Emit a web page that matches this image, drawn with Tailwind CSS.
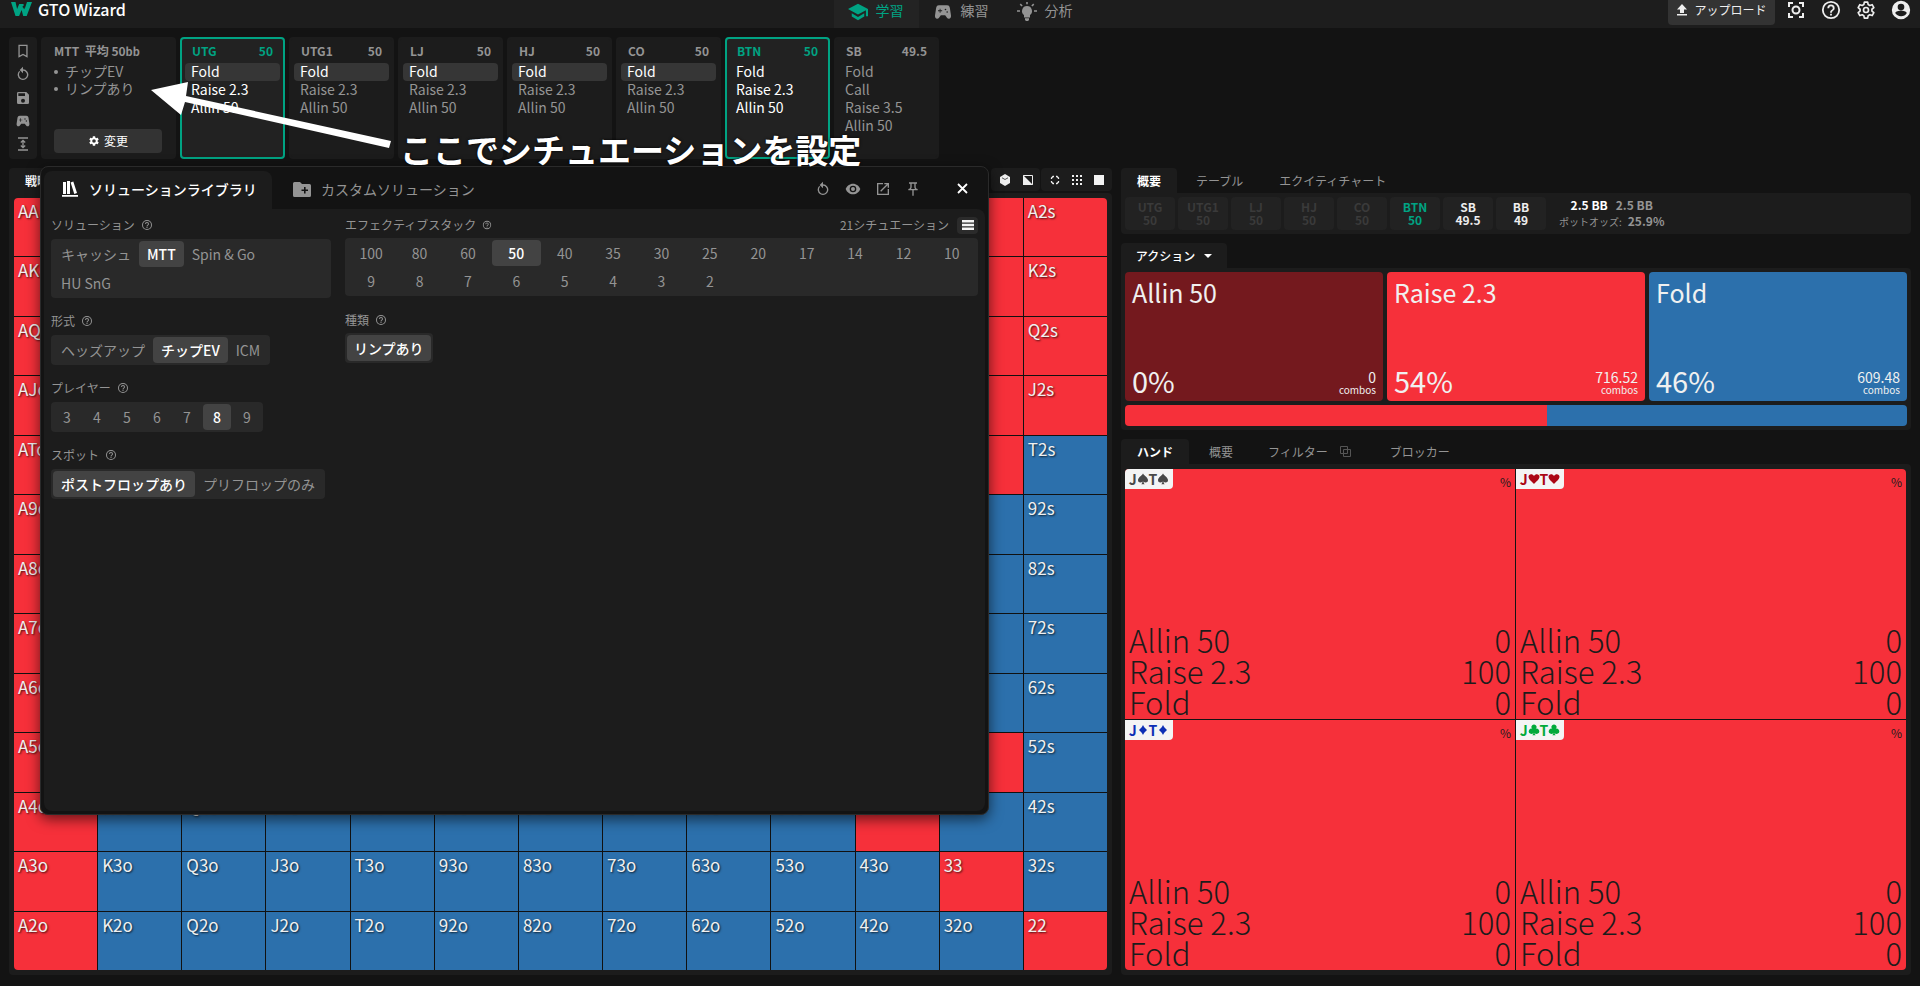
<!DOCTYPE html>
<html lang="ja">
<head>
<meta charset="utf-8">
<meta name="viewport" content="width=device-width, initial-scale=1">
<title>GTO Wizard</title>
<script src="https://cdn.jsdelivr.net/npm/@tailwindcss/browser@4"></script>
</head>
<body class="bg-[#131313] text-[#949494] font-['Noto_Sans_CJK_JP',sans-serif]">

<svg class="hidden" aria-hidden="true">
  <symbol id="i-pad" viewBox="0 0 24 24"><path fill="currentColor" fill-rule="evenodd" d="M21.6 16.1 20.200 6.800A3.300 3.300 0 0 0 17 4H7a3.300 3.300 0 0 0-3.200 2.800L2.400 16.100C2.100 18.200 3.200 20 5 20c.8 0 1.500-.3 2-.9L9.400 16h5.200l2.400 3.100c.5.600 1.200.9 2 .9 1.800 0 2.900-1.800 2.600-3.900zM11 11H9v2H8v-2H6v-1h2V8h1v2h2v1zm4-1a1 1 0 1 1 0-2 1 1 0 0 1 0 2zm2 3a1 1 0 1 1 0-2 1 1 0 0 1 0 2z"/></symbol>
  <symbol id="i-undo" viewBox="0 0 24 24"><path fill="currentColor" d="M12 5V1L7 6l5 5V7c3.300 0 6 2.700 6 6s-2.700 6-6 6-6-2.700-6-6c0-1.700.7-3.200 1.800-4.200L6.300 7.400A8 8 0 1 0 12 5z"/></symbol>
  <symbol id="i-help" viewBox="0 0 24 24"><path fill="currentColor" d="M11 18h2v-2h-2v2zm1-16a10 10 0 1 0 0 20 10 10 0 0 0 0-20zm0 18a8 8 0 1 1 0-16 8 8 0 0 1 0 16zm0-14a4 4 0 0 0-4 4h2a2 2 0 1 1 4 0c0 2-3 1.750-3 5h2c0-2.250 3-2.500 3-5a4 4 0 0 0-4-4z"/></symbol>
  <symbol id="i-gear" viewBox="0 0 24 24"><path fill="currentColor" fill-rule="evenodd" d="M19.140 12.940c.04-.3.060-.61.060-.94s-.02-.64-.07-.94l2.030-1.580a.49.490 0 0 0 .12-.61l-1.920-3.320a.488.488 0 0 0-.59-.22l-2.390.96c-.5-.38-1.030-.7-1.620-.94l-.36-2.540A.484.484 0 0 0 13.920 2.400h-3.840c-.24 0-.43.170-.47.410l-.36 2.540c-.59.240-1.130.570-1.620.94l-2.390-.96c-.22-.08-.47 0-.59.220L2.740 8.870c-.12.210-.08.470.12.610l2.030 1.580c-.05.300-.09.630-.09.940s.02.640.07.940l-2.030 1.580a.49.490 0 0 0-.12.610l1.920 3.320c.12.220.37.290.59.220l2.390-.96c.5.380 1.030.7 1.620.94l.36 2.540c.05.240.24.410.48.410h3.840c.24 0 .44-.17.470-.41l.36-2.540c.59-.24 1.130-.56 1.620-.94l2.390.96c.22.080.47 0 .59-.22l1.920-3.320a.49.490 0 0 0-.12-.61l-2.010-1.580zM12 15.600a3.600 3.600 0 1 1 0-7.200 3.600 3.600 0 0 1 0 7.200z"/></symbol>
  <symbol id="s-s" viewBox="0 0 24 24"><path fill="currentColor" d="M12 1C9 6 2 9 2 14.500c0 4.500 6 6 9 2.500-.2 2.500-1 4-2.500 5.500h7C14 21 13.200 19.500 13 17c3 3.500 9 2 9-2.500C22 9 15 6 12 1z"/></symbol>
  <symbol id="s-h" viewBox="0 0 24 24"><path fill="currentColor" d="M12 22C9 18 1 13.500 1 7.500 1 1.500 9 .5 12 6c3-5.500 11-4.500 11 1.500C23 13.500 15 18 12 22z"/></symbol>
  <symbol id="s-d" viewBox="0 0 24 24"><path fill="currentColor" d="M12 2c2 4 4.500 7 8 10-3.500 3-6 6-8 10-2-4-4.500-7-8-10 3.500-3 6-6 8-10z"/></symbol>
  <symbol id="s-c" viewBox="0 0 24 24"><path fill="currentColor" d="M12 1a5 5 0 0 0-3.500 8.700A5.200 5.200 0 1 0 11 17.500c-.2 2-.9 3.500-2.300 5h6.600c-1.400-1.500-2.100-3-2.300-5a5.200 5.200 0 1 0 2.500-7.800A5 5 0 0 0 12 1z"/></symbol>
</svg>

<div class="relative min-h-screen flex flex-col pb-[11px]">

  <header class="h-7 bg-[#1d1d1d] flex items-start justify-between">
    <a href="#" class="flex-1 flex items-center gap-[6px] pl-[11px] h-[18px] text-[16px] leading-[18px] font-medium text-white">
      <svg class="w-[21px] h-4" viewBox="0 0 21 16"><path fill="#00a383" d="M0 1h4.500l1.600 7L8.200 3h4.300l1 5.500L16 1h5l-5.300 14h-3.500L10.600 9l-2.500 6H4.500z"/><path fill="#1d1d1d" d="M13.500 4l-1 4-1-2.500z"/></svg>
      GTO Wizard
    </a>
    <nav class="mr-4 flex text-[14px] leading-5">
      <a href="#" class="h-7 w-[85px] bg-[#232323] text-[#00a383] flex items-start gap-2 pl-[14px]"><svg class="w-5 h-5 mt-[2px]" viewBox="0 0 24 24"><path fill="currentColor" d="M4.500 13.500v4L12 22l7.500-4.500v-4L12 18zM12 2 0 8.500 12 15l9.500-5.200V17H24V8.500z"/></svg>学習</a>
      <a href="#" class="flex items-start gap-2 pl-[14px]"><svg class="w-5 h-5 mt-[2px]"><use href="#i-pad"/></svg>練習</a>
      <a href="#" class="flex items-start gap-2 pl-7"><svg class="w-5 h-5 mt-[1px]" viewBox="0 0 20 20"><path fill="currentColor" d="M10 5a5 5 0 0 0-3 9v2.500h6V14a5 5 0 0 0-3-9zM8 17.300h4V19l-1 .9H9L8 19zM9.200 1h1.600v2.300H9.200zM0 9.200h3v1.600H0zM17 9.200h3v1.600h-3zM2.700 3.700l1.100-1.100 1.900 1.900-1.100 1.100zM14.300 4.500l1.900-1.900 1.100 1.100-1.900 1.900z"/></svg>分析</a>
    </nav>
    <div class="flex-1 flex items-start justify-end gap-[11px] pr-[9px] text-[#eeeeee]">
      <button class="h-[25px] w-[107px] rounded-b bg-[#333333] flex items-start justify-center gap-[6px] text-[12px] leading-5"><svg class="w-3 h-3 mt-1" viewBox="0 0 12 12"><path fill="currentColor" d="M6 0 1 5.500h3V9h4V5.500h3zM1 10h10v1.500H1z"/></svg>アップロード</button>
      <div class="flex items-start gap-[15px]">
        <button aria-label="スクリーンショット"><svg class="w-5 h-5" viewBox="0 0 20 20" fill="none" stroke="currentColor" stroke-width="2"><path d="M3 7V3h4M13 3h4v4M17 13v4h-4M7 17H3v-4"/><circle cx="10" cy="10" r="3.500"/></svg></button>
        <button aria-label="ヘルプ"><svg class="w-5 h-5" viewBox="1 1 22 22"><use href="#i-help" width="24" height="24"/></svg></button>
        <button aria-label="設定"><svg class="w-5 h-5" viewBox="0 0 24 24" fill="none" stroke="currentColor" stroke-width="2"><path stroke-linejoin="round" d="M10 2.500h4l.6 3 1.900 1.100 2.900-1 2 3.500-2.300 2v2.200l2.300 1.900-2 3.500-2.900-1-1.900 1.100-.6 2.900h-4l-.6-2.900-1.900-1.100-2.900 1-2-3.500 2.300-1.900v-2.200l-2.300-2 2-3.500 2.900 1 1.900-1.100z"/><circle cx="12" cy="12" r="3"/></svg></button>
        <button aria-label="アカウント"><svg class="w-5 h-5" viewBox="0 0 24 24"><path fill="currentColor" fill-rule="evenodd" d="M12 1a11 11 0 1 0 0 22 11 11 0 0 0 0-22zm0 3.500a4 4 0 1 1 0 8 4 4 0 0 1 0-8zm0 15c-3 0-5.600-1.500-7-3.800.5-2 4.500-2.700 7-2.700s6.500.7 7 2.700a8 8 0 0 1-7 3.800z"/></svg></button>
      </div>
    </div>
  </header>

  <section class="mt-[9px] ml-[9px] flex gap-1 h-[122px]" aria-label="アクション履歴">
    <div class="w-7 rounded bg-[#1c1c1c] flex flex-col items-center justify-between pt-[7px] pb-2">
      <button aria-label="ブックマーク"><svg class="w-4 h-[14px]" viewBox="0 0 16 16" fill="none" stroke="currentColor" stroke-width="1.500"><path d="M3.500 1.500h9v13L8 12l-4.500 2.500z"/></svg></button>
      <button aria-label="元に戻す"><svg class="w-4 h-4"><use href="#i-undo"/></svg></button>
      <button aria-label="保存"><svg class="w-4 h-4" viewBox="0 0 24 24"><path fill="currentColor" d="M17 3H5a2 2 0 0 0-2 2v14a2 2 0 0 0 2 2h14a2 2 0 0 0 2-2V7zm-5 16a3 3 0 1 1 0-6 3 3 0 0 1 0 6zm3-10H5V5h10z"/></svg></button>
      <button aria-label="練習"><svg class="w-4 h-4"><use href="#i-pad"/></svg></button>
      <button aria-label="高さ"><svg class="w-3 h-[14px]" viewBox="0 0 12 14" fill="none" stroke="currentColor" stroke-width="1.300"><path d="M1 1h10M1 13h10M6 3.500v7M3.800 5.500 6 3.300l2.200 2.200M3.800 8.500 6 10.700l2.200-2.200"/></svg></button>
    </div>
    <div class="w-[135px] rounded bg-[#1c1c1c] pl-[13px] pr-[14px] pt-[5px] pb-[6px] flex flex-col">
      <div class="text-[12px] leading-[18px] font-bold whitespace-pre">MTT  平均 50<span class="text-[11px]">bb</span></div>
      <ul class="mt-[3px] text-[14px] leading-[17px]">
        <li class="flex items-center gap-[7px]"><span class="size-1 rounded-full bg-[#949494]"></span>チップEV</li>
        <li class="flex items-center gap-[7px]"><span class="size-1 rounded-full bg-[#949494]"></span>リンプあり</li>
      </ul>
      <button class="mt-auto h-6 rounded bg-[#333333] text-white text-[12px] flex items-center justify-center gap-1"><svg class="w-3 h-3"><use href="#i-gear"/></svg>変更</button>
    </div>
    <div id="seats" class="flex gap-1"></div>
  </section>

  <main class="mt-[9px] ml-[9px] mr-[9px] flex-1 flex gap-[9px]">
    <section class="flex-[1103] flex flex-col min-w-0">
      <div class="h-[25px] flex items-start">
        <button class="h-full w-[56px] rounded-t bg-[#1c1c1c] text-[12px] font-bold text-white">戦略</button>
        <div class="ml-auto flex gap-px text-[#eeeeee]">
          <div class="h-[23px] w-[49px] rounded bg-[#1c1c1c] flex items-center justify-center gap-3">
            <button aria-label="立体"><svg class="w-3 h-3" viewBox="0 0 12 12"><path fill="currentColor" d="M6 0 1 3v6l5 3 5-3V3z"/><path fill="none" stroke="#555" d="M3 3.800 6 5.500l3-1.700"/></svg></button>
            <button aria-label="反転"><svg class="w-[10px] h-[10px]" viewBox="0 0 10 10"><path fill="none" stroke="currentColor" d="M.5.500h9v9h-9z"/><path fill="currentColor" d="M0 0v10h10z"/></svg></button>
          </div>
          <div class="h-[23px] w-[71px] rounded bg-[#1c1c1c] flex items-center justify-center gap-3">
            <button aria-label="縮小"><svg class="w-[10px] h-[10px]" viewBox="0 0 10 10" fill="none" stroke="currentColor" stroke-width="1.300"><path d="M4 1.500H3L1.500 3v1M6 1.500h1L8.500 3v1M8.500 6v1L7 8.500H6M4 8.500H3L1.500 7V6"/></svg></button>
            <button aria-label="グリッド"><svg class="w-[10px] h-[10px]" viewBox="0 0 10 10"><path fill="currentColor" d="M0 0h2v2H0zM4 0h2v2H4zM8 0h2v2H8zM0 4h2v2H0zM4 4h2v2H4zM8 4h2v2H8zM0 8h2v2H0zM4 8h2v2H4zM8 8h2v2H8z"/></svg></button>
            <button aria-label="全体" class="size-[10px] bg-[#f4f4f4]"></button>
          </div>
        </div>
      </div>
      <div class="flex-1 rounded-b rounded-tr bg-[#1c1c1c] pt-[5px] pl-[5px] pr-[5px] pb-[5px] flex">
        <div id="matrix" class="flex-1 grid grid-cols-13 grid-rows-13 gap-px rounded overflow-hidden bg-[#111111] text-[17px] leading-5 text-[#f0f0f0] [text-shadow:1px_1px_2px_rgba(0,0,0,0.7)]"></div>
      </div>
    </section>

    <section class="flex-[790] flex flex-col min-w-0">
      <div class="h-[25px] flex items-stretch text-[12px]">
        <button class="w-14 rounded-t bg-[#1c1c1c] font-bold text-white">概要</button>
        <button class="ml-[19px]">テーブル</button>
        <button class="ml-9">エクイティチャート</button>
      </div>
      <div class="h-[41px] rounded-b rounded-tr bg-[#1c1c1c] px-1 flex items-center">
        <div id="stacks" class="flex gap-[3px] text-[12px] leading-[13px] font-bold text-center"></div>
        <div class="ml-[13px] text-center leading-4">
          <div class="text-[12px] font-bold"><span class="text-white">2.5 BB</span><span class="ml-2">2.5 BB</span></div>
          <div class="text-[12px]"><span class="text-[10px]">ポットオッズ:</span><span class="ml-[6px] font-bold">25.9%</span></div>
        </div>
      </div>

      <div class="mt-[9px] h-[25px] flex">
        <button class="w-[106px] rounded-t bg-[#1c1c1c] text-[12px] font-medium text-white flex items-center justify-center gap-[9px]">アクション<svg class="w-2 h-1" viewBox="0 0 8 4"><path fill="currentColor" d="M0 0h8L4 4z"/></svg></button>
      </div>
      <div class="h-[162px] rounded-b rounded-tr bg-[#1c1c1c] p-1 flex flex-col gap-1 text-[#f0f0f0]">
        <div id="actions" class="flex-1 grid grid-cols-3 gap-1 [text-shadow:1px_1px_2px_rgba(0,0,0,0.7)]"></div>
        <div class="h-[21px] rounded overflow-hidden flex"><div class="bg-[#f6303a]" style="width:54%"></div><div class="bg-[#2c70ac] flex-1"></div></div>
      </div>

      <div class="mt-[9px] h-[25px] flex items-stretch text-[12px]">
        <button class="w-[68px] rounded-t bg-[#1c1c1c] font-bold text-white">ハンド</button>
        <button class="ml-5">概要</button>
        <button class="ml-[35px] flex items-center gap-3">フィルター<svg class="w-[11px] h-[11px] text-[#555555]" viewBox="0 0 11 11" fill="none" stroke="currentColor"><path d="M.5.500h7v7h-7zM3.500 3.500h7v7h-7z"/></svg></button>
        <button class="ml-[39px]">ブロッカー</button>
      </div>
      <div class="flex-1 rounded-b rounded-tr bg-[#1c1c1c] pt-[5px] pl-1 pr-[5px] pb-[5px] flex">
        <div id="hands" class="flex-1 grid grid-cols-2 grid-rows-2 gap-px bg-[#131313] rounded overflow-hidden text-[#1c1c1c]"></div>
      </div>
    </section>
  </main>

  <!-- Solution library dialog -->
  <div role="dialog" aria-label="ソリューションライブラリ" class="absolute left-10 top-[166px] w-[949px] h-[649px] rounded-lg bg-[#131313] border border-[#2a2a2a] p-[3px] pt-1 flex flex-col shadow-[0_4px_14px_rgba(0,0,0,0.6)]">
    <div class="h-[38px] flex items-stretch text-[14px]">
      <button class="w-[228px] rounded-t-lg bg-[#1c1c1c] text-white font-medium flex items-center pb-[2px] pl-[18px] gap-[11px]"><svg class="w-4 h-4" viewBox="0 0 16 16"><path fill="currentColor" d="M1 1h3v12H1zM5 0h3v13H5zM8.600 1.500l2.700-.9L15 12l-2.700.9zM0 14h16v1.800H0z"/></svg>ソリューションライブラリ</button>
      <button class="ml-[21px] flex items-center pb-[2px] gap-[10px]"><svg class="w-[18px] h-[15px]" viewBox="0 0 18 15"><path fill="currentColor" fill-rule="evenodd" d="M1.500 0H7l2 2h7.500A1.500 1.500 0 0 1 18 3.500v10a1.500 1.500 0 0 1-1.500 1.500h-15A1.500 1.500 0 0 1 0 13.500v-12A1.500 1.500 0 0 1 1.500 0zM11 5v2.500H8.500V9H11v2.500h1.600V9H15V7.500h-2.400V5z"/></svg>カスタムソリューション</button>
      <div class="ml-auto flex items-center gap-[14px] pb-[3px] pr-4">
        <button aria-label="リセット"><svg class="w-4 h-4"><use href="#i-undo"/></svg></button>
        <button aria-label="表示"><svg class="w-4 h-4" viewBox="0 0 24 24"><path fill="currentColor" fill-rule="evenodd" d="M12 4C7 4 2.700 7.400 1 12c1.700 4.600 6 8 11 8s9.300-3.400 11-8c-1.700-4.600-6-8-11-8zm0 13a5 5 0 1 1 0-10 5 5 0 0 1 0 10zm0-8a3 3 0 1 0 0 6 3 3 0 0 0 0-6z"/></svg></button>
        <button aria-label="別窓で開く"><svg class="w-4 h-4" viewBox="0 0 24 24"><path fill="currentColor" d="M19 19H5V5h7V3H3v18h18v-9h-2zM14 3v2h3.600l-9.800 9.800 1.400 1.400L19 6.400V10h2V3z"/></svg></button>
        <button aria-label="固定"><svg class="w-4 h-4" viewBox="0 0 24 24"><path fill="currentColor" d="M14 4v5c0 1.100.4 2.200 1 3H9c.7-.9 1-1.900 1-3V4h4m4-2H6v2h2v5c0 1.700-1.300 3-3 3v2h6v8h2v-8h6v-2c-1.700 0-3-1.300-3-3V4h2z"/></svg></button>
        <button aria-label="閉じる" class="ml-[21px] text-white"><svg class="w-[13px] h-[13px]" viewBox="0 0 13 13" fill="none" stroke="currentColor" stroke-width="1.800"><path d="M2 2l9 9M11 2l-9 9"/></svg></button>
      </div>
    </div>
    <div class="flex-1 rounded-b-lg rounded-tr-lg bg-[#1c1c1c] flex gap-[14px] pl-[7px] pr-[7px] pt-[6px] text-[14px]">
      <div class="w-[280px] flex flex-col items-start">
        <h3 class="h-5 mb-1 flex items-center gap-[6px] text-[12px]">ソリューション<svg class="w-3 h-3"><use href="#i-help"/></svg></h3>
        <div class="w-full rounded bg-[#292929] p-[2px] flex flex-wrap gap-y-[3px] leading-[26px]">
          <button class="px-2">キャッシュ</button><button class="px-2 rounded bg-[#434343] text-white font-medium">MTT</button><button class="px-2">Spin &amp; Go</button><button class="px-2">HU SnG</button>
        </div>
        <h3 class="mt-[13px] h-5 mb-1 flex items-center gap-[6px] text-[12px]">形式<svg class="w-3 h-3"><use href="#i-help"/></svg></h3>
        <div class="rounded bg-[#292929] p-[2px] flex leading-[26px]">
          <button class="px-2">ヘッズアップ</button><button class="px-2 rounded bg-[#434343] text-white font-medium">チップEV</button><button class="px-2">ICM</button>
        </div>
        <h3 class="mt-[13px] h-5 mb-1 flex items-center gap-[6px] text-[12px]">プレイヤー<svg class="w-3 h-3"><use href="#i-help"/></svg></h3>
        <div class="rounded bg-[#292929] p-[2px] flex gap-[2px] leading-[26px]">
          <button class="w-7">3</button><button class="w-7">4</button><button class="w-7">5</button><button class="w-7">6</button><button class="w-7">7</button><button class="w-7 rounded bg-[#434343] text-white font-medium">8</button><button class="w-7">9</button>
        </div>
        <h3 class="mt-[13px] h-5 mb-1 flex items-center gap-[6px] text-[12px]">スポット<svg class="w-3 h-3"><use href="#i-help"/></svg></h3>
        <div class="rounded bg-[#292929] p-[2px] flex leading-[26px]">
          <button class="px-2 rounded bg-[#434343] text-white font-medium">ポストフロップあり</button><button class="px-2">プリフロップのみ</button>
        </div>
      </div>
      <div class="flex-1 flex flex-col items-start">
        <div class="w-full h-5 mb-[3px] flex items-center text-[12px]">
          <h3 class="flex items-center gap-[6px]">エフェクティブスタック<svg class="w-[10px] h-[10px]"><use href="#i-help"/></svg></h3>
          <span class="ml-auto">21シチュエーション</span>
          <button aria-label="一覧" class="ml-2 h-[17px] w-[21px] rounded bg-[#2b2b2b] flex items-center justify-center"><svg class="w-3 h-[10px]" viewBox="0 0 12 10"><path fill="#f4f4f4" d="M0 0h12v2.500H0zM0 3.700h12v2.500H0zM0 7.500h12V10H0z"/></svg></button>
        </div>
        <div id="depths" class="w-full rounded bg-[#292929] p-[2px] grid grid-cols-13 gap-y-[2px] leading-[26px]"></div>
        <h3 class="mt-[14px] h-5 mb-[3px] flex items-center gap-[6px] text-[12px]">種類<svg class="w-3 h-3"><use href="#i-help"/></svg></h3>
        <div class="rounded bg-[#292929] p-[2px] flex leading-[26px]"><button class="px-[7px] rounded bg-[#434343] text-white font-medium">リンプあり</button></div>
      </div>
    </div>
  </div>

  <!-- Callout drawn over the interface -->
  <svg class="absolute left-[150px] top-[78px] w-[244px] h-[74px] pointer-events-none" viewBox="0 0 244 74" aria-hidden="true"><path fill="#fff" d="M1 12 38 4l-2 14 205 45-2 7L35 24l-4 13z"/></svg>
  <p class="absolute left-[400px] top-[125px] text-[33px] leading-[48px] font-bold text-white whitespace-nowrap pointer-events-none [text-shadow:0_0_3px_#000]">ここでシチュエーションを設定</p>
</div>

<script>
const fill = (id, html) => { document.getElementById(id).innerHTML = html; };

const seats = [
  ['UTG', '50', true, 'Fold'], ['UTG1', '50', false, 'Fold'], ['LJ', '50', false, 'Fold'], ['HJ', '50', false, 'Fold'],
  ['CO', '50', false, 'Fold'], ['BTN', '50', true, ''], ['SB', '49.5', false, '']
];
fill('seats', seats.map(([name, stack, active, chosen]) => {
  const moves = name === 'SB' ? ['Fold', 'Call', 'Raise 3.5', 'Allin 50'] : ['Fold', 'Raise 2.3', 'Allin 50'];
  const rows = moves.map(m => `<button class="${m === chosen
    ? 'w-full h-[18px] px-[6px] flex items-start rounded bg-[#363636] text-white'
    : 'w-full h-[18px] px-[6px] flex items-start'}">${m}</button>`).join('');
  return `<div class="${active
      ? 'w-[105px] rounded border-2 border-[#00a383] bg-[#222222] text-white px-[3px] pt-[3px]'
      : 'w-[105px] rounded border-2 border-[#1c1c1c] bg-[#1c1c1c] px-[3px] pt-[3px]'}">
    <div class="${active
      ? 'flex justify-between px-[7px] text-[12px] leading-[18px] font-bold text-[#00a383]'
      : 'flex justify-between px-[7px] text-[12px] leading-[18px] font-bold'}"><span>${name}</span><span>${stack}</span></div>
    <div class="mt-[3px] text-[14px] leading-4">${rows}</div></div>`;
}).join(''));

const ranks = 'AKQJT98765432'.split('');
const redCells = new Set('A3s A2s K3s K2s Q3s Q2s J3s J2s T3s 53s 44 33 22'.split(' '));
let cells = '';
ranks.forEach((r, i) => ranks.forEach((c, j) => {
  const hand = i === j ? r + c : i < j ? r + c + 's' : c + r + 'o';
  const red = j === 0 || i === j || (i < j && i < 5 && j < 11) || redCells.has(hand);
  cells += red ? `<div class="bg-[#f6303a] pl-1 pt-[3px]">${hand}</div>` : `<div class="bg-[#2c70ac] pl-1 pt-[3px]">${hand}</div>`;
}));
fill('matrix', cells);

fill('stacks', [['UTG', '50', 'text-[#3a3a3a]'], ['UTG1', '50', 'text-[#3a3a3a]'], ['LJ', '50', 'text-[#3a3a3a]'], ['HJ', '50', 'text-[#3a3a3a]'],
  ['CO', '50', 'text-[#3a3a3a]'], ['BTN', '50', 'text-[#00a383]'], ['SB', '49.5', 'text-[#eeeeee]'], ['BB', '49', 'text-[#eeeeee]']]
  .map(([n, s, tone]) => `<div class="w-[50px] h-[33px] rounded bg-[#222222] pt-[3px] ${tone}"><div>${n}</div><div>${s}</div></div>`).join(''));

fill('actions', [['Allin 50', '0%', '0', 'bg-[#74191e]'], ['Raise 2.3', '54%', '716.52', 'bg-[#f6303a]'], ['Fold', '46%', '609.48', 'bg-[#2c70ac]']]
  .map(([n, p, c, tone]) => `<button class="rounded ${tone} pl-[7px] pr-[7px] pt-1 pb-[5px] flex flex-col justify-between text-left">
    <span class="text-[25px] leading-8">${n}</span>
    <span class="w-full flex items-end justify-between"><span class="text-[29px] leading-8">${p}</span>
    <span class="text-right"><span class="block text-[14px] leading-[14px]">${c}</span><span class="block text-[10px] leading-3">combos</span></span></span></button>`).join(''));

fill('hands', [['s', 'text-[#484848]'], ['h', 'text-[#ab0614]'], ['d', 'text-[#0d2fb5]'], ['c', 'text-[#02aa3b]']]
  .map(([s, tone]) => `<div class="bg-[#f6303a] flex flex-col justify-between">
    <div class="flex justify-between"><div class="h-5 w-12 rounded-br bg-[#f4f4f4] flex items-center justify-center text-[14px] leading-5 font-bold ${tone}">J<svg class="w-3 h-3"><use href="#s-${s}"/></svg>T<svg class="w-3 h-3"><use href="#s-${s}"/></svg></div>
    <span class="pr-1 pt-[3px] text-[12px] leading-5">%</span></div>
    <div class="px-1 pb-[2px] text-[31px] leading-[31px] font-light">${[['Allin 50', 0], ['Raise 2.3', 100], ['Fold', 0]].map(([n, v]) => `<div class="flex justify-between"><span>${n}</span><span>${v}</span></div>`).join('')}</div></div>`).join(''));

fill('depths', [100, 80, 60, 50, 40, 35, 30, 25, 20, 17, 14, 12, 10, 9, 8, 7, 6, 5, 4, 3, 2]
  .map(d => d === 50 ? `<button class="rounded bg-[#434343] text-white font-medium">${d}</button>` : `<button>${d}</button>`).join(''));
</script>
</body>
</html>
